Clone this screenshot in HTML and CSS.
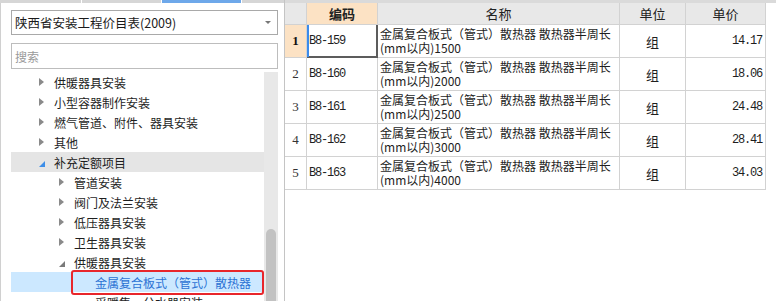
FILE: index.html
```html
<!DOCTYPE html>
<html lang="zh-CN">
    <head>
        <meta charset="UTF-8">
        <meta name="viewport" content="width=device-width, initial-scale=1.0">
        <title>定额库 - 散热器</title>
        <link rel="stylesheet" href="styles.css">
    </head>
    <body>
        <div class="app">
            <aside class="lib">
                <div class="tabs">
                    <span class="tab"></span>
                    <span class="tab"></span>
                    <span class="tab active"></span>
                    <span class="tab rest"></span>
                </div>

                <div class="select">
                    <span>陕西省安装工程价目表(2009)</span>
                    <svg class="caret" width="6" height="3" viewBox="0 0 6 3"><polygon points="0,0 6,0 3,3" fill="#777"/></svg>
                </div>

                <input class="search" type="text" placeholder="搜索">

                <div class="tree-wrap">
                    <ul class="tree">
                        <li class="node lv1"><span class="arrow"><svg width="5" height="8" viewBox="0 0 5 8"><polygon points="0,0 5,4 0,8" fill="#8a8a8a"/></svg></span>供暖器具安装</li>
                        <li class="node lv1"><span class="arrow"><svg width="5" height="8" viewBox="0 0 5 8"><polygon points="0,0 5,4 0,8" fill="#8a8a8a"/></svg></span>小型容器制作安装</li>
                        <li class="node lv1"><span class="arrow"><svg width="5" height="8" viewBox="0 0 5 8"><polygon points="0,0 5,4 0,8" fill="#8a8a8a"/></svg></span>燃气管道、附件、器具安装</li>
                        <li class="node lv1"><span class="arrow"><svg width="5" height="8" viewBox="0 0 5 8"><polygon points="0,0 5,4 0,8" fill="#8a8a8a"/></svg></span>其他</li>
                        <li class="node lv1 hover"><span class="arrow open"><svg width="6" height="6" viewBox="0 0 6 6"><polygon points="6,0 6,6 0,6" fill="#3d8ee8"/></svg></span>补充定额项目</li>
                        <li class="node lv2"><span class="arrow"><svg width="5" height="8" viewBox="0 0 5 8"><polygon points="0,0 5,4 0,8" fill="#8a8a8a"/></svg></span>管道安装</li>
                        <li class="node lv2"><span class="arrow"><svg width="5" height="8" viewBox="0 0 5 8"><polygon points="0,0 5,4 0,8" fill="#8a8a8a"/></svg></span>阀门及法兰安装</li>
                        <li class="node lv2"><span class="arrow"><svg width="5" height="8" viewBox="0 0 5 8"><polygon points="0,0 5,4 0,8" fill="#8a8a8a"/></svg></span>低压器具安装</li>
                        <li class="node lv2"><span class="arrow"><svg width="5" height="8" viewBox="0 0 5 8"><polygon points="0,0 5,4 0,8" fill="#8a8a8a"/></svg></span>卫生器具安装</li>
                        <li class="node lv2"><span class="arrow open"><svg width="6" height="6" viewBox="0 0 6 6"><polygon points="6,0 6,6 0,6" fill="#7a7a7a"/></svg></span>供暖器具安装</li>
                        <li class="node lv3 selected"><span class="arrow"></span>金属复合板式（管式）散热器<span class="mark"></span></li>
                        <li class="node lv3"><span class="arrow"></span>采暖集、分水器安装</li>
                    </ul>
                    <div class="scrollbar">
                        <svg class="up" width="7" height="4" viewBox="0 0 7 4"><polygon points="0,4 3.5,0 7,4" fill="#6e6e6e"/></svg>
                        <div class="thumb"></div>
                    </div>
                </div>
            </aside>

            <main class="grid-panel">
                <div class="topline"></div>
                <div class="grid">
                    <div class="cell head"></div>
                    <div class="cell head active">编码</div>
                    <div class="cell head">名称</div>
                    <div class="cell head">单位</div>
                    <div class="cell head">单价</div>

                    <div class="cell num active">1</div>
                    <div class="cell code focus">B8-159</div>
                    <div class="cell name">金属复合板式（管式）散热器 散热器半周长<br>(mm以内)1500</div>
                    <div class="cell unit">组</div>
                    <div class="cell price">14.17</div>

                    <div class="cell num">2</div>
                    <div class="cell code">B8-160</div>
                    <div class="cell name">金属复合板式（管式）散热器 散热器半周长<br>(mm以内)2000</div>
                    <div class="cell unit">组</div>
                    <div class="cell price">18.06</div>

                    <div class="cell num">3</div>
                    <div class="cell code">B8-161</div>
                    <div class="cell name">金属复合板式（管式）散热器 散热器半周长<br>(mm以内)2500</div>
                    <div class="cell unit">组</div>
                    <div class="cell price">24.48</div>

                    <div class="cell num">4</div>
                    <div class="cell code">B8-162</div>
                    <div class="cell name">金属复合板式（管式）散热器 散热器半周长<br>(mm以内)3000</div>
                    <div class="cell unit">组</div>
                    <div class="cell price">28.41</div>

                    <div class="cell num">5</div>
                    <div class="cell code">B8-163</div>
                    <div class="cell name">金属复合板式（管式）散热器 散热器半周长<br>(mm以内)4000</div>
                    <div class="cell unit">组</div>
                    <div class="cell price">34.03</div>
                </div>
            </main>
        </div>
    </body>
</html>
```

FILE: styles.css
```css
* {
    box-sizing: border-box;
}

body {
    margin: 0;
    width: 776px;
    height: 301px;
    overflow: hidden;
    background-color: white;
    color: #1e1e1e;
    font-family: "Noto Sans CJK SC", "Noto Sans", sans-serif;
    font-size: 12px;
}

.app {
    display: flex;
    height: 301px;
}

/* left: quota library tree */

.lib {
    width: 284px;
    flex: none;
    display: flex;
    flex-direction: column;
    border-left: 1px solid #d0d0d0;
}

.tabs {
    display: flex;
    gap: 1px;
    height: 3px;
    margin-left: -1px;
}

.tab {
    width: 81px;
    background-color: #d6d6d6;
}

.tab + .tab {
    width: 79px;
}

.tab.active {
    background-color: #6ea8ea;
}

.tab.rest {
    flex: 1;
}

.select {
    margin: 7px 6px 0 10px;
    height: 25px;
    border: 1px solid #a9a9a9;
    display: flex;
    align-items: center;
    justify-content: space-between;
    padding: 0 6px 0 3px;
    font-size: 12.5px;
    color: #1a1a1a;
}

.search {
    margin: 8px 6px 0 10px;
    height: 26px;
    border: 1px solid #bdbdbd;
    padding: 0 3px;
    font-family: "Noto Sans CJK SC", sans-serif;
    font-size: 12px;
    outline: none;
}

.search::placeholder {
    color: #9a9a9a;
}

.tree-wrap {
    display: flex;
    margin: 3px 6px 0 10px;
    flex: 1;
    min-height: 0;
}

.tree {
    list-style: none;
    margin: 0;
    padding: 0;
    flex: 1;
    overflow: hidden;
    font-size: 12px;
}

.node {
    position: relative;
    display: flex;
    align-items: center;
    height: 20px;
    white-space: nowrap;
}

.lv1 {
    padding-left: 28px;
}

.lv2 {
    padding-left: 48px;
}

.lv3 {
    padding-left: 69px;
}

.arrow {
    width: 15px;
    flex: none;
    display: flex;
    align-items: center;
}

.arrow svg {
    display: block;
}

.arrow.open svg {
    margin-top: 3px;
}

.hover {
    background-color: #e5e5e5;
}

.selected {
    background-color: #cce8ff;
    color: #2b72d4;
}

/* red annotation around the picked item */
.mark {
    position: absolute;
    left: 60px;
    right: 0;
    top: -2px;
    height: 25px;
    border: 2px solid #e8262b;
    border-radius: 3px;
}

.scrollbar {
    width: 14px;
    flex: none;
    background-color: #e8e8e8;
    display: flex;
    flex-direction: column;
    align-items: center;
    padding-top: 2px;
}

.up {
    display: block;
}

.thumb {
    width: 10px;
    flex: none;
    height: 80px;
    margin-top: 155px;
    background-color: #c2c2c2;
    border-radius: 5px 5px 0 0;
}

/* right: quota grid */

.grid-panel {
    flex: 1;
    border-left: 1px solid #c4c4c4;
}

.topline {
    height: 3px;
    background-color: #dadada;
}

.grid {
    display: grid;
    grid-template-columns: 22px 71px 242px 66px 80px;
    grid-template-rows: 22px repeat(5, 33px);
}

.cell {
    border-right: 1px solid #d2d2d2;
    border-bottom: 1px solid #d2d2d2;
    display: flex;
    align-items: center;
    white-space: nowrap;
}

.head {
    background-color: #e8e8e8;
    justify-content: center;
    font-size: 13px;
    color: #222;
}

.head.active {
    background-color: #fce2c4;
    font-weight: bold;
}

.num {
    justify-content: center;
    font-family: "Liberation Serif", serif;
    font-size: 13px;
    color: #333;
}

.num.active {
    background-color: #fce2c4;
    font-weight: bold;
    color: #111;
}

.code {
    padding-left: 2px;
    font-family: "Liberation Mono", monospace;
    font-size: 12px;
    letter-spacing: -1.2px;
}

.code.focus {
    border-right-color: #5c5c5c;
    border-bottom-color: #5c5c5c;
    box-shadow: inset 2px 0 0 #3b8beb, inset -1px -1px 0 #5c5c5c;
}

.name {
    display: block;
    padding: 2px 0 0 2px;
    font-size: 12px;
    line-height: 14px;
}

.unit {
    justify-content: center;
    font-size: 13px;
}

.price {
    justify-content: flex-end;
    padding-right: 3px;
    font-family: "Liberation Mono", monospace;
    font-size: 12px;
    letter-spacing: -1.2px;
}
```
